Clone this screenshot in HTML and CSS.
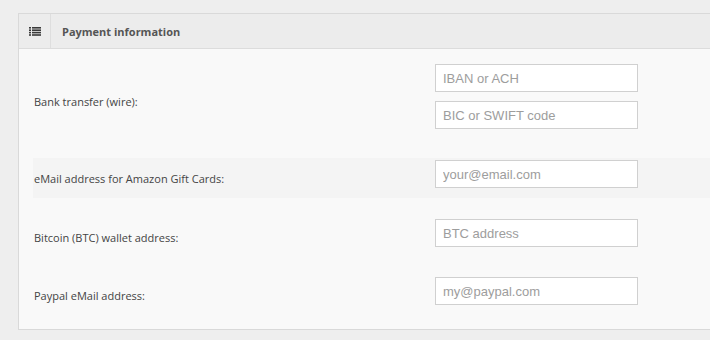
FILE: index.html
```html
<!DOCTYPE html>
<html>
<head>
<meta charset="utf-8">
<link rel="stylesheet" href="styles.css">
</head>
<body>
<div class="panel">
  <div class="panel-head">
    <div class="head-icon">
      <svg width="12" height="9" viewBox="0 0 12 9">
        <rect x="0" y="0" width="2" height="1.6" fill="#3a3a3a"/>
        <rect x="3" y="0" width="9" height="1.6" fill="#3a3a3a"/>
        <rect x="0" y="2.4" width="2" height="1.6" fill="#3a3a3a"/>
        <rect x="3" y="2.4" width="9" height="1.6" fill="#3a3a3a"/>
        <rect x="0" y="4.8" width="2" height="1.6" fill="#3a3a3a"/>
        <rect x="3" y="4.8" width="9" height="1.6" fill="#3a3a3a"/>
        <rect x="0" y="7.2" width="2" height="1.6" fill="#3a3a3a"/>
        <rect x="3" y="7.2" width="9" height="1.6" fill="#3a3a3a"/>
      </svg>
    </div>
    <div class="head-title">Payment information</div>
  </div>
  <div class="panel-body">
    <div class="row row-bank">
      <div class="label">Bank transfer (wire):</div>
      <div class="fields">
        <input class="inp" type="text" placeholder="IBAN or ACH">
        <input class="inp" type="text" placeholder="BIC or SWIFT code">
      </div>
    </div>
    <div class="row row-amazon striped">
      <div class="label">eMail address for Amazon Gift Cards:</div>
      <div class="fields">
        <input class="inp" type="text" placeholder="your@email.com">
      </div>
    </div>
    <div class="row row-btc">
      <div class="label">Bitcoin (BTC) wallet address:</div>
      <div class="fields">
        <input class="inp" type="text" placeholder="BTC address">
      </div>
    </div>
    <div class="row row-paypal">
      <div class="label">Paypal eMail address:</div>
      <div class="fields">
        <input class="inp" type="text" placeholder="my@paypal.com">
      </div>
    </div>
  </div>
</div>
</body>
</html>
```

FILE: styles.css
```css
html, body {
  margin: 0;
  padding: 0;
  background: #eeeeee;
  overflow: hidden;
}
body {
  padding: 13px 0 0 18px;
  width: 710px;
  height: 340px;
  box-sizing: border-box;
}
.panel {
  width: 692px;
  box-sizing: border-box;
  border: 1px solid #d9d9d9;
  border-right: none;
  background: #f9f9f9;
}
.panel-head {
  display: flex;
  height: 34px;
  background: #ececec;
  border-bottom: 1px solid #dcdcdc;
}
.head-icon {
  width: 31px;
  border-right: 1px solid #dedede;
  display: flex;
  align-items: center;
  justify-content: center;
}
.head-icon svg {
  margin-top: 1px;
}
.head-title {
  display: flex;
  align-items: center;
  padding-left: 11px;
  font-family: "Open Sans", sans-serif;
  font-weight: bold;
  font-size: 11px;
  color: #555;
}
.panel-body {
  padding: 0 0 15px 14px;
}
.row {
  display: flex;
}
.striped {
  background: #f4f4f4;
}
.label {
  width: 401px;
  padding-left: 1px;
  align-self: center;
  font-family: "Open Sans", sans-serif;
  font-size: 11px;
  color: #444;
}
.fields {
  display: flex;
  flex-direction: column;
  gap: 9px;
}
.inp {
  width: 203px;
  height: 28px;
  box-sizing: border-box;
  border: 1px solid #d0d0d0;
  background: #fff;
  padding: 0 7px;
  font-family: "Liberation Sans", Arial, sans-serif;
  font-size: 13px;
  color: #333;
  outline: none;
  margin: 0;
}
.inp::placeholder {
  color: #9d9d9d;
}
.row-bank {
  height: 109px;
}
.row-bank .label {
  margin-top: -4px;
}
.row-bank .fields {
  padding-top: 15px;
}
.row-amazon {
  height: 40px;
}
.row-amazon .fields {
  padding-top: 2px;
}
.row-btc {
  height: 78px;
}
.row-btc .fields {
  padding-top: 21px;
}
.row-paypal {
  height: 38px;
}
.row-paypal .fields {
  padding-top: 1px;
}
```
